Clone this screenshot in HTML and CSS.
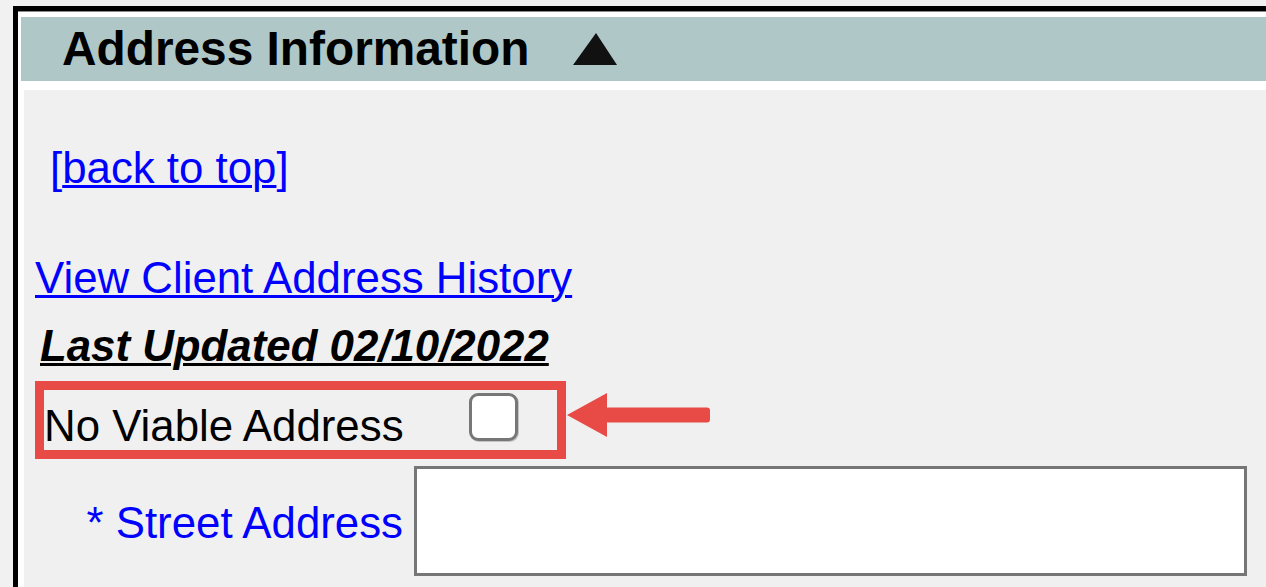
FILE: index.html
```html
<!DOCTYPE html>
<html lang="en">
<head>
<meta charset="utf-8">
<title>Address Information</title>
<link rel="stylesheet" href="styles.css">
</head>
<body>
<div class="panel">
  <div class="panel-header">
    <span class="panel-title">Address Information</span>
    <svg class="collapse-icon" width="44" height="32" viewBox="0 0 44 32" aria-hidden="true">
      <polygon points="23,0 44,32 0,32" fill="#111"/>
    </svg>
  </div>
  <div class="panel-body">
    <div class="back-top">[<a href="#top">back to top</a>]</div>
    <a class="history-link" href="#history">View Client Address History</a>
    <div class="last-updated">Last Updated 02/10/2022</div>
    <div class="nva-wrap">
      <label class="nva-box">
        <span class="nva-label">No Viable Address</span>
        <input type="checkbox" class="nva-check">
      </label>
      <svg class="callout-arrow" width="144" height="44" viewBox="0 0 144 44" aria-hidden="true">
        <polygon points="0,22 40,0 40,44" fill="#e84b45"/>
        <rect x="38" y="14.5" width="105" height="15" rx="3" fill="#e84b45"/>
      </svg>
    </div>
    <div class="field-row">
      <label class="field-label" for="street">* Street Address</label>
      <input id="street" class="field-input" type="text">
    </div>
  </div>
</div>
</body>
</html>
```

FILE: styles.css
```css
html, body {
  margin: 0;
  padding: 0;
  overflow: hidden;
  background: #f1f1f1;
}

body {
  font-family: "Liberation Sans", Arial, sans-serif;
  color: #000;
}

.panel {
  margin: 6px 0 0 13px;
  border-top: 5px solid #000;
  border-left: 5px solid #000;
  background: #fff;
  padding: 6px 0 0 3px;
  box-shadow: inset 0 1px 0 #8a8a8a;
  min-height: 700px;
}

.panel-header {
  height: 64px;
  background: #b0c7c8;
  padding-left: 41px;
  line-height: 64px;
  font-size: 47.8px;
  font-weight: bold;
  white-space: nowrap;
}

.collapse-icon {
  margin-left: 30px;
  vertical-align: baseline;
}

.panel-body {
  margin: 9px 0 0 3px;
  background: #f0f0f0;
  min-height: 640px;
  display: flex;
  flex-direction: column;
  align-items: flex-start;
  font-size: 43.8px;
  line-height: 50px;
}

.back-top {
  margin-top: 53px;
  padding-left: 26px;
  color: #0000ff;
}

.back-top a,
.history-link {
  color: #0000ff;
  text-decoration: underline;
  text-decoration-thickness: 3px;
}

.history-link {
  margin-top: 60px;
  margin-left: 11px;
}

.last-updated {
  margin-top: 18px;
  margin-left: 16px;
  font-weight: bold;
  font-style: italic;
  text-decoration: underline;
  text-decoration-thickness: 3px;
}

.nva-wrap {
  position: relative;
  margin-top: 10px;
  margin-left: 11px;
}

.nva-box {
  display: flex;
  align-items: flex-start;
  height: 60px;
  border: 9px solid #e84b45;
  padding-right: 39px;
}

.nva-label {
  width: 425px;
  padding-top: 12px;
  line-height: 48px;
}

.nva-check {
  appearance: none;
  -webkit-appearance: none;
  margin: 3px 0 0;
  width: 49px;
  height: 48px;
  box-sizing: border-box;
  border: 3px solid #777;
  border-radius: 9px;
  background: #fff;
  box-shadow: 1px 1px 0 #c4c4c4;
}

.callout-arrow {
  position: absolute;
  left: calc(100% + 1px);
  top: 12px;
}

.field-row {
  display: flex;
  align-items: flex-start;
  margin-top: 7px;
}

.field-label {
  width: 379px;
  margin-top: 32px;
  text-align: right;
  color: #0000ff;
}

.field-input {
  margin: 0 0 0 11px;
  width: 833px;
  height: 110px;
  box-sizing: border-box;
  border: 3px solid #767676;
  border-radius: 0;
  background: #fff;
  padding: 0;
}
```
